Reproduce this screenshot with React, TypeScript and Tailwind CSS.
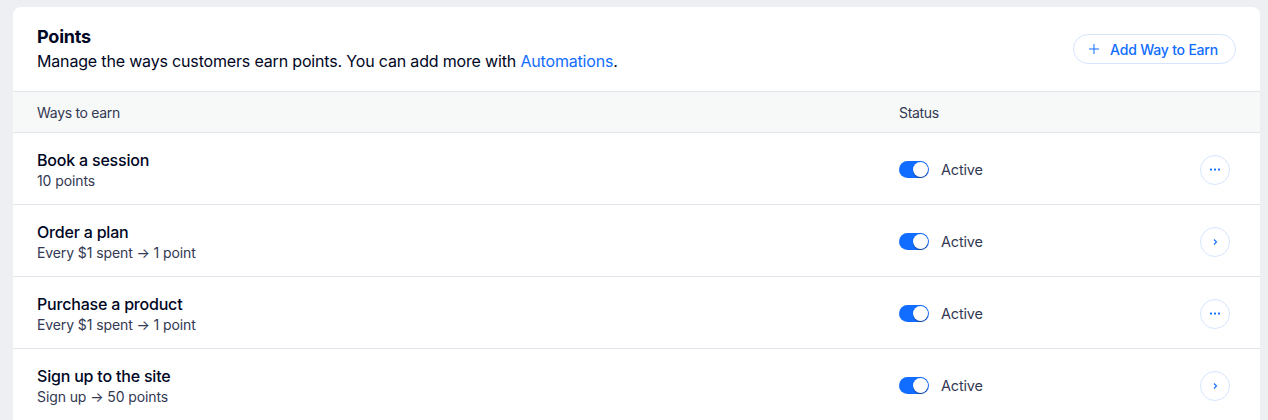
import React from "react";

const rows = [
  { title: "Book a session", sub: "10 points", action: "more" },
  { title: "Order a plan", sub: "Every $1 spent \u2192 1 point", action: "chevron" },
  { title: "Purchase a product", sub: "Every $1 spent \u2192 1 point", action: "more" },
  { title: "Sign up to the site", sub: "Sign up \u2192 50 points", action: "chevron" },
];

function Toggle() {
  return (
    <div className="relative w-[30px] h-[17px] rounded-full bg-[#116dff] shrink-0">
      <div className="absolute right-[1px] top-[1px] w-[15px] h-[15px] rounded-full bg-white shadow-[0_1px_1px_rgba(0,6,36,0.45)]" />
    </div>
  );
}

function ActionButton({ kind }: { kind: string }) {
  return (
    <div className="w-[30px] h-[30px] rounded-full border border-[#d6e5fd] flex items-center justify-center bg-white">
      {kind === "more" ? (
        <svg width="10" height="3" viewBox="0 0 10 3">
          <rect x="0" y="0.5" width="2" height="2" rx="0.6" fill="#116dff" />
          <rect x="4" y="0.5" width="2" height="2" rx="0.6" fill="#116dff" />
          <rect x="8" y="0.5" width="2" height="2" rx="0.6" fill="#116dff" />
        </svg>
      ) : (
        <svg width="8" height="10" viewBox="0 0 8 10">
          <path d="M3 2.5 L5.5 5 L3 7.5" fill="none" stroke="#116dff" strokeWidth="1.1" />
        </svg>
      )}
    </div>
  );
}

export default function App() {
  return (
    <div
      className="w-[1268px] h-[420px] overflow-hidden bg-[#edeff3] pl-[13px] pr-[8px] pt-[7px]"
      style={{ fontFamily: "Inter, 'Noto Sans', sans-serif" }}
    >
      <div className="bg-white rounded-t-[8px] h-[500px]">
        <div className="flex items-start justify-between pl-[24px] pr-[24px] pt-[18px] h-[85px] border-b border-[#dfe5eb]">
          <div>
            <div className="text-[18px] leading-[24px] font-bold text-[#000624] tracking-[-0.2px]">Points</div>
            <div className="text-[16px] leading-[24px] text-[#000624] tracking-[-0.17px]">
              Manage the ways customers earn points. You can add more with{" "}
              <span className="text-[#116dff]">Automations</span>.
            </div>
          </div>
          <div className="flex items-center h-[30px] rounded-full border border-[#d6e5fd] pl-[14px] pr-[17px] gap-[10px] mt-[9px]">
            <svg width="12" height="12" viewBox="0 0 12 12">
              <path d="M6 1 V11 M1 6 H11" stroke="#116dff" strokeWidth="1" />
            </svg>
            <span className="text-[14px] font-medium text-[#116dff] tracking-[-0.2px]">Add Way to Earn</span>
          </div>
        </div>
        <div className="flex items-center h-[41px] bg-[#f7f8f8] border-b border-[#dfe5eb] text-[14px] text-[#333853] tracking-[-0.3px]">
          <div className="pl-[24px] w-[886px]">Ways to earn</div>
          <div>Status</div>
        </div>
        {rows.map((r) => (
          <div key={r.title} className="flex items-center h-[72px] border-b border-[#dfe5eb] pt-[2px]">
            <div className="pl-[24px] w-[886px]">
              <div className="text-[16px] leading-[22px] font-medium text-[#000624] tracking-[-0.2px]">{r.title}</div>
              <div className="text-[14px] leading-[20px] text-[#333853] tracking-[-0.1px]">{r.sub}</div>
            </div>
            <div className="flex items-center gap-[12px] flex-1">
              <Toggle />
              <span className="text-[14.5px] text-[#333853] tracking-[-0.2px]">Active</span>
            </div>
            <div className="pr-[30px]">
              <ActionButton kind={r.action} />
            </div>
          </div>
        ))}
      </div>
    </div>
  );
}
